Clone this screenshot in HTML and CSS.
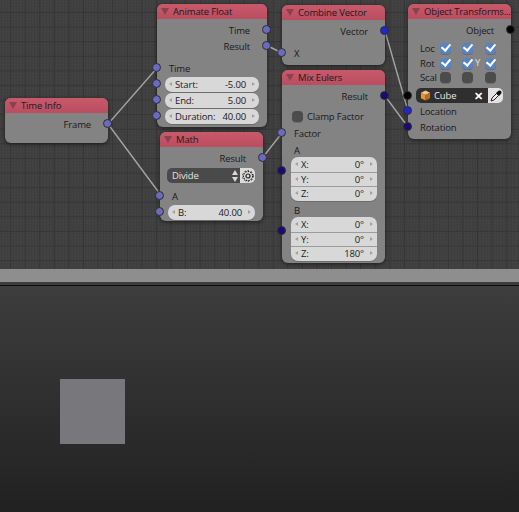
FILE: index.html
```html
<!DOCTYPE html>
<html lang="en">
<head>
    <meta charset="UTF-8">
    <meta name="viewport" content="width=device-width, initial-scale=1.0">
    <title>Node Editor</title>
    <link rel="stylesheet" href="styles.css">
</head>
<body>
<div class="node-editor">
    <svg class="wires" width="519" height="269" viewBox="0 0 519 269">
        <path d="M108 124 L157 68"/>
        <path d="M108 124 L160 194"/>
        <path d="M263 157 L282 133"/>
        <path d="M266 45 L282 53"/>
        <path d="M385 31 L408 111"/>
        <path d="M385 96 L408 127"/>
    </svg>

    <div class="node time-info">
        <div class="node-header"><span class="arrow"></span>Time Info</div>
        <div class="node-body">
            <div class="row out">Frame<span class="socket"></span></div>
        </div>
    </div>

    <div class="node animate-float">
        <div class="node-header"><span class="arrow"></span>Animate Float</div>
        <div class="node-body">
            <div class="row out">Time<span class="socket"></span></div>
            <div class="row out spaced">Result<span class="socket"></span></div>
            <div class="row in">Time<span class="socket"></span></div>
            <div class="row in"><span class="socket"></span>
                <div class="field"><span>Start:</span><span>-5.00</span></div>
            </div>
            <div class="row in"><span class="socket"></span>
                <div class="field"><span>End:</span><span>5.00</span></div>
            </div>
            <div class="row in"><span class="socket"></span>
                <div class="field"><span>Duration:</span><span>40.00</span></div>
            </div>
        </div>
    </div>

    <div class="node math">
        <div class="node-header"><span class="arrow"></span>Math</div>
        <div class="node-body">
            <div class="row out">Result<span class="socket"></span></div>
            <div class="op-row">
                <div class="select">Divide
                    <svg class="updown" width="6" height="12" viewBox="0 0 6 12"><path d="M3 0 L6 5 H0Z M3 12 L6 7 H0Z"/></svg>
                </div>
                <div class="icon-btn">
                    <svg width="14" height="14" viewBox="0 0 14 14" fill="none" stroke="#222" stroke-width="1.2">
                        <circle cx="7" cy="7" r="4.6" stroke-dasharray="1.6 1"/>
                        <circle cx="7" cy="7" r="5.6" stroke-width="0.7" stroke-dasharray="1.6 2"/>
                        <circle cx="7" cy="7" r="2"/>
                    </svg>
                </div>
            </div>
            <div class="row in">A<span class="socket"></span></div>
            <div class="row in"><span class="socket"></span>
                <div class="field"><span>B:</span><span>40.00</span></div>
            </div>
        </div>
    </div>

    <div class="node combine-vector">
        <div class="node-header"><span class="arrow"></span>Combine Vector</div>
        <div class="node-body">
            <div class="row out spaced">Vector<span class="socket vector"></span></div>
            <div class="row in">X<span class="socket"></span></div>
        </div>
    </div>

    <div class="node mix-eulers">
        <div class="node-header"><span class="arrow"></span>Mix Eulers</div>
        <div class="node-body">
            <div class="row out">Result<span class="socket euler"></span></div>
            <div class="row in clamp"><span class="check off"></span>Clamp Factor</div>
            <div class="row in">Factor<span class="socket"></span></div>
            <div class="row in small">A</div>
            <div class="row in stack-row"><span class="socket euler"></span>
                <div class="stack">
                    <div class="field"><span>X:</span><span>0°</span></div>
                    <div class="field"><span>Y:</span><span>0°</span></div>
                    <div class="field"><span>Z:</span><span>0°</span></div>
                </div>
            </div>
            <div class="row in small">B</div>
            <div class="row in stack-row"><span class="socket euler"></span>
                <div class="stack">
                    <div class="field"><span>X:</span><span>0°</span></div>
                    <div class="field"><span>Y:</span><span>0°</span></div>
                    <div class="field"><span>Z:</span><span>180°</span></div>
                </div>
            </div>
        </div>
    </div>

    <div class="node transforms">
        <div class="node-header"><span class="arrow"></span>Object Transforms...</div>
        <div class="node-body">
            <div class="row out object-out">Object<span class="socket object"></span></div>
            <div class="flags">
                <span>Loc</span><span class="check on"></span><span class="check on"></span><span class="check on"></span>
                <span>Rot</span><span class="check on"></span><span class="check on"></span><span class="check on"></span>
                <span>Scal</span><span class="check off"></span><span class="check off"></span><span class="check off"></span>
                <span class="y-hint">Y</span>
            </div>
            <div class="row in object-row"><span class="socket object"></span>
                <div class="picker">
                    <svg width="11" height="11" viewBox="0 0 12 12">
                        <path d="M6 0.5 L11 3 L6 5.5 L1 3Z" fill="#f4c48a"/>
                        <path d="M1 3 L6 5.5 V11.5 L1 9Z" fill="#e8962e"/>
                        <path d="M11 3 L6 5.5 V11.5 L11 9Z" fill="#b9701c"/>
                    </svg>
                    <span class="picker-name">Cube</span>
                    <span class="clear">✕</span>
                </div>
                <div class="dropper">
                    <svg width="12" height="12" viewBox="0 0 12 12">
                        <path d="M1 11 L2 8 L6.5 3.5 L8.5 5.5 L4 10Z" fill="#eee" stroke="#222"/>
                        <path d="M6 3 L8.5 .8 Q10 0 11 1 Q12 2 11.2 3.5 L9 6Z" fill="#111"/>
                    </svg>
                </div>
            </div>
            <div class="row in">Location<span class="socket vector"></span></div>
            <div class="row in">Rotation<span class="socket euler"></span></div>
        </div>
    </div>
</div>

<div class="split-bar"></div>
<div class="split-gap"></div>

<div class="view-3d">
    <div class="square"></div>
</div>
</body>
</html>
```

FILE: styles.css
```css
* {
    box-sizing: border-box;
    margin: 0;
    padding: 0;
}

body {
    width: 519px;
    height: 512px;
    overflow: hidden;
    background: #2a2a2a;
    font-family: "Open Sans", "Noto Sans", sans-serif;
    font-size: 9.5px;
    font-stretch: 88%;
    letter-spacing: -0.15px;
    color: #1a1a1a;
}

.node-editor {
    position: relative;
    height: 269px;
    background-color: #414141;
    background-image:
        linear-gradient(#363636 1px, transparent 1px),
        linear-gradient(90deg, #363636 1px, transparent 1px),
        repeating-conic-gradient(#3e3e3e 0 25%, #434343 0 50%);
    background-size: 14.6px 14.6px, 14.6px 14.6px, 3px 3px;
    background-position: 10px 12px, 10px 12px, 0 0;
}

.wires {
    position: absolute;
    top: 0;
    left: 0;
}

.wires path {
    stroke: #a4a4a4;
    stroke-width: 1.4;
    fill: none;
}

.node {
    position: absolute;
    background: #838383;
    border-radius: 6px;
    box-shadow: 0 1px 4px rgba(0,0,0,0.55);
    white-space: nowrap;
}

.time-info { left: 5px; top: 98px; width: 103px; height: 45px; }
.animate-float { left: 157px; top: 4px; width: 110px; height: 123px; }
.math { left: 160px; top: 132px; width: 103px; height: 89px; }
.combine-vector { left: 282px; top: 5px; width: 103px; height: 60px; }
.mix-eulers { left: 282px; top: 70px; width: 103px; height: 193px; }
.transforms { left: 408px; top: 4px; width: 103px; height: 135px; }

.node-header {
    display: flex;
    align-items: center;
    height: 15px;
    padding-left: 4px;
    background: linear-gradient(#c8596b, #b94e60);
    border-radius: 6px 6px 0 0;
    overflow: hidden;
}

.arrow {
    width: 0;
    height: 0;
    margin-right: 4px;
    border-left: 4px solid transparent;
    border-right: 4px solid transparent;
    border-top: 7px solid #8a414d;
}

.node-body {
    padding-top: 3px;
}

.row {
    position: relative;
    display: flex;
    align-items: center;
    height: 16px;
}

.row.out {
    justify-content: flex-end;
    padding-right: 17px;
}

.row.in {
    padding-left: 12px;
    padding-right: 8px;
}

.row.in:has(> .field) {
    padding-left: 8px;
}

.row.spaced {
    margin-bottom: 6px;
}

.socket {
    position: absolute;
    top: 3px;
    width: 9px;
    height: 9px;
    background: #6a6abf;
    border: 1px solid #2e2e2e;
    border-radius: 50%;
}

.row.in .socket { left: -5px; }
.row.out .socket { right: -4px; }

.socket.vector { background: #2424cc; }
.socket.euler { background: #1c0a72; }
.socket.object { background: #000; }

.field {
    display: flex;
    flex: 1;
    justify-content: space-between;
    align-items: center;
    position: relative;
    height: 15px;
    padding: 0 13px 0 10px;
    background: #d8d8d8;
    border-radius: 7px;
    box-shadow: 0 1px 0 #6d6d6d;
}

.field::before,
.field::after {
    content: "";
    position: absolute;
    top: 5px;
    border-top: 2.5px solid transparent;
    border-bottom: 2.5px solid transparent;
}

.field::before {
    left: 4px;
    border-right: 3px solid #a2a2a2;
}

.field::after {
    right: 4px;
    border-left: 3px solid #a2a2a2;
}

.op-row {
    display: flex;
    margin: 2px 8px 5px 7px;
    height: 15px;
}

.select {
    display: flex;
    flex: 1;
    justify-content: space-between;
    align-items: center;
    padding: 0 2px 0 5px;
    background: #4a4a4a;
    color: #e4e4e4;
    border-radius: 5px 0 0 5px;
}

.updown path { fill: #d8d8d8; }

.icon-btn {
    display: flex;
    align-items: center;
    justify-content: center;
    width: 15px;
    background: #dcdcdc;
    border-radius: 0 5px 5px 0;
}

.check {
    display: block;
    position: relative;
    width: 11px;
    height: 11px;
    border-radius: 4px;
    background: #4c4c4c;
    box-shadow: 0 1px 0 #6d6d6d;
}

.check.on { background: #5784c6; }

.check.on::after {
    content: "";
    position: absolute;
    left: 3px;
    top: -1px;
    width: 4px;
    height: 7px;
    border-right: 2px solid #fff;
    border-bottom: 2px solid #fff;
    transform: rotate(40deg);
}

.row.in.clamp {
    gap: 4px;
    margin: 4px 0 1px;
    padding-left: 10px;
}

.row.small {
    height: 14px;
    margin-top: 2px;
}

.stack-row {
    height: 44px;
}

.stack-row .socket {
    top: 9px;
}

.row.in.stack-row {
    padding-left: 9px;
}

.stack {
    flex: 1;
    background: #d8d8d8;
    border-radius: 7px;
    box-shadow: 0 1px 0 #6d6d6d;
}

.stack .field {
    height: 14.67px;
    background: none;
    border-radius: 0;
    box-shadow: 0 1px 0 #9c9c9c;
}

.stack .field:last-child {
    box-shadow: none;
}

.row.object-out {
    margin-bottom: 4px;
}

.flags {
    position: relative;
    display: grid;
    grid-template-columns: 8px 11px 11px 11px;
    grid-auto-rows: 13px;
    column-gap: 11.5px;
    row-gap: 1.5px;
    align-items: center;
    padding-left: 12px;
    margin-bottom: 4px;
    line-height: 13px;
}

.y-hint {
    position: absolute;
    left: 67px;
    top: 14px;
    color: #e0e0e0;
}

.object-row {
    height: 15px;
}

.row.in.object-row {
    padding-left: 8px;
}

.picker {
    display: flex;
    flex: 1;
    align-items: center;
    height: 15px;
    padding: 0 5px 0 4px;
    gap: 3px;
    background: #2f2f2f;
    color: #e6e6e6;
    border-radius: 5px 0 0 5px;
}

.picker-name { flex: 1; }

.clear {
    font-size: 11px;
    font-weight: bold;
    color: #fff;
}

.dropper {
    display: flex;
    align-items: center;
    justify-content: center;
    width: 15px;
    height: 15px;
    background: #e2e2e2;
    border-radius: 0 5px 5px 0;
}

.split-bar {
    height: 13px;
    background: #8e8e8e;
}

.split-gap {
    height: 4px;
    background: #3c3c3c;
    border-bottom: 1px solid #0c0c0c;
}

.view-3d {
    position: relative;
    height: 226px;
    background: linear-gradient(#3d3d3d, #212121);
}

.square {
    position: absolute;
    left: 60px;
    top: 93px;
    width: 65px;
    height: 65px;
    background: #78787c;
}
```
